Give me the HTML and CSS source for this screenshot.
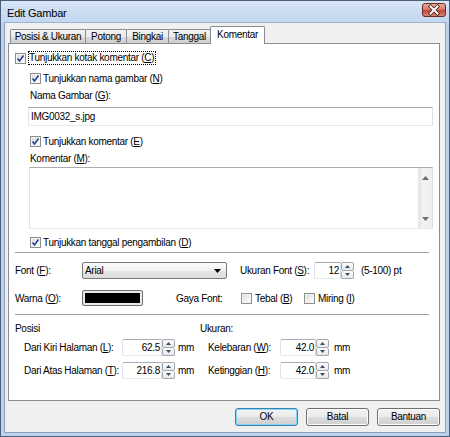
FILE: index.html
```html
<!DOCTYPE html>
<html>
<head>
<meta charset="utf-8">
<title>Edit Gambar</title>
<link rel="stylesheet" href="styles.css">
</head>
<body>
<div class="window">
  <div class="titlebar">
    <span class="title">Edit Gambar</span>
    <span class="close">
      <svg width="24" height="14" viewBox="0 0 24 14">
        <defs>
          <linearGradient id="cg" x1="0" y1="0" x2="0" y2="1">
            <stop offset="0" stop-color="#eab2a6"/>
            <stop offset="0.45" stop-color="#d37a6c"/>
            <stop offset="0.55" stop-color="#c2493b"/>
            <stop offset="1" stop-color="#d98a7c"/>
          </linearGradient>
        </defs>
        <rect x="0.5" y="0.5" width="23" height="13" rx="2.5" fill="url(#cg)" stroke="#6e2b22"/>
        <path d="M8.5 3.5 L15.5 10.5 M15.5 3.5 L8.5 10.5" stroke="#4a1a14" stroke-width="3.6" stroke-linecap="square"/>
        <path d="M8.5 3.5 L15.5 10.5 M15.5 3.5 L8.5 10.5" stroke="#ffffff" stroke-width="2" stroke-linecap="square"/>
      </svg>
    </span>
  </div>
  <div class="client">
    <div class="tabs">
      <div class="tab t1">Posisi &amp; Ukuran</div>
      <div class="tab t2">Potong</div>
      <div class="tab t3">Bingkai</div>
      <div class="tab t4">Tanggal</div>
      <div class="tab active">Komentar</div>
    </div>
    <div class="panel">
      <div class="row r1">
        <span class="cb checked"><svg width="9" height="9" viewBox="0 0 9 9"><path d="M1.5 4.5 L3.5 7 L7.5 1.5" fill="none" stroke="#23408e" stroke-width="1.6"/></svg></span>
        <span class="focus">Tunjukkan kotak komentar (<u>C</u>)</span>
      </div>
      <div class="row r2">
        <span class="cb checked"><svg width="9" height="9" viewBox="0 0 9 9"><path d="M1.5 4.5 L3.5 7 L7.5 1.5" fill="none" stroke="#23408e" stroke-width="1.6"/></svg></span>
        <span>Tunjukkan nama gambar (<u>N</u>)</span>
      </div>
      <div class="row lbl-nama">Nama Gambar (<u>G</u>):</div>
      <div class="textbox nama">IMG0032_s.jpg</div>
      <div class="row r4">
        <span class="cb checked"><svg width="9" height="9" viewBox="0 0 9 9"><path d="M1.5 4.5 L3.5 7 L7.5 1.5" fill="none" stroke="#23408e" stroke-width="1.6"/></svg></span>
        <span>Tunjukkan komentar (<u>E</u>)</span>
      </div>
      <div class="row lbl-kom">Komentar (<u>M</u>):</div>
      <div class="textarea">
        <div class="vscroll">
          <svg width="7" height="4" viewBox="0 0 7 4"><path d="M0 4 L3.5 0 L7 4 Z" fill="#6d6d6d"/></svg>
          <svg width="7" height="4" viewBox="0 0 7 4"><path d="M0 0 L3.5 4 L7 0 Z" fill="#6d6d6d"/></svg>
        </div>
      </div>
      <div class="row r-tgl">
        <span class="cb checked"><svg width="9" height="9" viewBox="0 0 9 9"><path d="M1.5 4.5 L3.5 7 L7.5 1.5" fill="none" stroke="#23408e" stroke-width="1.6"/></svg></span>
        <span>Tunjukkan tanggal pengambilan (<u>D</u>)</span>
      </div>
      <div class="sep"></div>
      <div class="row font-row">
        <span class="flabel">Font (<u>F</u>):</span>
        <div class="combo">
          <span>Arial</span>
          <svg width="7" height="4" viewBox="0 0 7 4"><path d="M0 0 L7 0 L3.5 4 Z" fill="#000"/></svg>
        </div>
        <span class="ulabel">Ukuran Font (<u>S</u>):</span>
        <div class="spin">
          <div class="spin-input w27">12</div>
          <div class="spin-btns">
            <span class="sb"><svg width="5" height="3" viewBox="0 0 5 3"><path d="M0 3 L2.5 0 L5 3 Z" fill="#3d4a5f"/></svg></span>
            <span class="sb"><svg width="5" height="3" viewBox="0 0 5 3"><path d="M0 0 L2.5 3 L5 0 Z" fill="#3d4a5f"/></svg></span>
          </div>
        </div>
        <span class="range">(5-100) pt</span>
      </div>
      <div class="row warna-row">
        <span class="flabel">Warna (<u>O</u>):</span>
        <div class="swatch"><div class="swatch-in"></div></div>
        <span class="glabel">Gaya Font:</span>
        <span class="cbgroup tebal"><span class="cb"></span><span>Tebal (<u>B</u>)</span></span>
        <span class="cbgroup"><span class="cb"></span><span>Miring (<u>I</u>)</span></span>
      </div>
      <div class="sep sep2"></div>
      <div class="row pos-head">
        <span class="poscol">Posisi</span>
        <span>Ukuran:</span>
      </div>
      <div class="row pos-row first">
        <div class="lgroup">
          <span class="plabel">Dari Kiri Halaman (<u>L</u>):</span>
          <div class="spin">
            <div class="spin-input w40">62.5</div>
            <div class="spin-btns">
              <span class="sb"><svg width="5" height="3" viewBox="0 0 5 3"><path d="M0 3 L2.5 0 L5 3 Z" fill="#3d4a5f"/></svg></span>
              <span class="sb"><svg width="5" height="3" viewBox="0 0 5 3"><path d="M0 0 L2.5 3 L5 0 Z" fill="#3d4a5f"/></svg></span>
            </div>
          </div>
          <span class="mm">mm</span>
        </div>
        <span class="rlabel">Kelebaran (<u>W</u>):</span>
        <div class="spin">
          <div class="spin-input w36">42.0</div>
          <div class="spin-btns">
            <span class="sb"><svg width="5" height="3" viewBox="0 0 5 3"><path d="M0 3 L2.5 0 L5 3 Z" fill="#3d4a5f"/></svg></span>
            <span class="sb"><svg width="5" height="3" viewBox="0 0 5 3"><path d="M0 0 L2.5 3 L5 0 Z" fill="#3d4a5f"/></svg></span>
          </div>
        </div>
        <span class="mm mm2">mm</span>
      </div>
      <div class="row pos-row second">
        <div class="lgroup">
          <span class="plabel">Dari Atas Halaman (<u>T</u>):</span>
          <div class="spin">
            <div class="spin-input w40">216.8</div>
            <div class="spin-btns">
              <span class="sb"><svg width="5" height="3" viewBox="0 0 5 3"><path d="M0 3 L2.5 0 L5 3 Z" fill="#3d4a5f"/></svg></span>
              <span class="sb"><svg width="5" height="3" viewBox="0 0 5 3"><path d="M0 0 L2.5 3 L5 0 Z" fill="#3d4a5f"/></svg></span>
            </div>
          </div>
          <span class="mm">mm</span>
        </div>
        <span class="rlabel">Ketinggian (<u>H</u>):</span>
        <div class="spin">
          <div class="spin-input w36">42.0</div>
          <div class="spin-btns">
            <span class="sb"><svg width="5" height="3" viewBox="0 0 5 3"><path d="M0 3 L2.5 0 L5 3 Z" fill="#3d4a5f"/></svg></span>
            <span class="sb"><svg width="5" height="3" viewBox="0 0 5 3"><path d="M0 0 L2.5 3 L5 0 Z" fill="#3d4a5f"/></svg></span>
          </div>
        </div>
        <span class="mm mm2">mm</span>
      </div>
    </div>
    <div class="buttons">
      <div class="btn default">OK</div>
      <div class="btn">Batal</div>
      <div class="btn">Bantuan</div>
    </div>
  </div>
</div>
</body>
</html>
```
FILE: styles.css
```css
* { box-sizing: border-box; }
body {
  margin: 0;
  background: #ffffff;
  font-family: "Liberation Sans", Arial, sans-serif;
  font-size: 10px;
  letter-spacing: -0.3px;
  color: #000;
  white-space: nowrap;
}
u { text-decoration: underline; text-underline-offset: 1px; }

.window {
  width: 450px;
  height: 437px;
  border: 1px solid #4a5f7c;
  background: linear-gradient(#d7e5f6, #c3d7ef 21px, #bdd3ec 22px, #bdd3ec);
  padding: 0 3px 3px 3px;
  display: flex;
  flex-direction: column;
}
.titlebar {
  height: 21px;
  display: flex;
  justify-content: space-between;
  align-items: flex-start;
  padding-left: 3px;
}
.title {
  font-size: 11px;
  letter-spacing: -0.2px;
  line-height: 12px;
  margin-top: 6px;
  color: #000;
}
.close { margin-top: 2px; height: 14px; display: block; }
.close svg { display: block; }

.client {
  flex: 1;
  background: #f0f0f0;
  border: 1px solid #8aa2c0;
  border-top-color: #9db3cf;
  padding-top: 3px;
  display: flex;
  flex-direction: column;
}

.tabs {
  display: flex;
  height: 17px;
  margin-left: 5px;
  align-items: flex-end;
  position: relative;
  z-index: 1;
}
.tab {
  height: 14px;
  line-height: 13px;
  border: 1px solid #898c95;
  border-bottom: none;
  margin-right: -1px;
  text-align: center;
  background: linear-gradient(#f3f3f3, #ebebeb 50%, #dcdcdc 51%, #cfcfcf);
  border-radius: 2px 2px 0 0;
}
.t1 { width: 76px; }
.t2 { width: 42px; }
.t3 { width: 43px; }
.t4 { width: 43px; }
.tab.active {
  width: 55px;
  height: 18px;
  margin-bottom: -1px;
  background: #fff;
  line-height: 15px;
}

.panel {
  margin: 0 5px 0 3px;
  height: 358px;
  border: 1px solid #898c95;
  background: #fff;
  padding-top: 6px;
}

.row { display: flex; align-items: center; }
.r1 { height: 16px; margin-left: 6px; }
.r2 { height: 16px; margin-top: 4px; margin-left: 21px; }
.lbl-nama { height: 14px; margin-top: 2px; margin-left: 21px; }
.r4 { height: 14px; margin-top: 8px; margin-left: 21px; }
.lbl-kom { height: 14px; margin-top: 3px; margin-left: 21px; }
.r-tgl { height: 15px; margin-top: 6px; margin-left: 21px; }

.cb {
  width: 11px;
  height: 11px;
  border: 1px solid #8e8f8f;
  background: linear-gradient(135deg, #d8d8d8, #f6f6f6 70%, #ffffff);
  box-shadow: inset 0 0 0 1px #f4f4f4;
  margin-right: 2px;
  display: inline-flex;
  align-items: center;
  justify-content: center;
  flex: none;
}
.cb svg { display: block; }
.focus { border: 1px dotted #000; padding: 0 1px 0 0; line-height: 12px; }

.textbox {
  height: 19px;
  border: 1px solid;
  border-color: #abadb3 #dbdfe6 #e3e9ef #e2e3ea;
  background: #fff;
  line-height: 17px;
}
.nama {
  margin-top: 5px;
  margin-left: 19px;
  width: 405px;
  padding-left: 2px;
}

.textarea {
  margin-top: 2px;
  margin-left: 20px;
  width: 404px;
  height: 62px;
  border: 1px solid;
  border-color: #abadb3 #dbdfe6 #e3e9ef #e2e3ea;
  display: flex;
  justify-content: flex-end;
}
.vscroll {
  width: 14px;
  background: linear-gradient(90deg, #e4e4e4, #f3f3f3 40%, #eeeeee);
  display: flex;
  flex-direction: column;
  justify-content: space-between;
  align-items: center;
  padding: 8px 0 7px;
}
.vscroll svg { display: block; }

.sep {
  height: 1px;
  background: #a0a0a0;
  margin: 2px 10px 0 6px;
}
.sep2 { margin-top: 7px; }

.font-row { height: 19px; margin-top: 8px; margin-left: 6px; }
.flabel { width: 67px; flex: none; }
.combo {
  width: 145px;
  height: 17px;
  border: 1px solid #7a7a7a;
  border-radius: 2px;
  background: linear-gradient(#fbfbfb, #f1f1f1 50%, #e6e6e6 51%, #dcdcdc);
  display: flex;
  align-items: center;
  justify-content: space-between;
  padding: 0 5px 0 2px;
}
.combo svg { display: block; }
.ulabel { margin-left: 13px; width: 74px; flex: none; }
.range { margin-left: 7px; }

.spin { display: flex; height: 17px; flex: none; }
.spin-input {
  height: 17px;
  border: 1px solid;
  border-color: #abadb3 #dbdfe6 #e3e9ef #e2e3ea;
  border-radius: 2px 0 0 2px;
  text-align: right;
  padding-right: 1px;
  line-height: 15px;
  background: #fff;
}
.w27 { width: 27px; }
.w40 { width: 40px; }
.w36 { width: 36px; }
.spin-btns {
  width: 13px;
  display: flex;
  flex-direction: column;
}
.sb {
  flex: 1;
  border: 1px solid #a3a6ad;
  border-radius: 2px;
  background: linear-gradient(#fdfdfd, #e6e8ec);
  display: flex;
  align-items: center;
  justify-content: center;
}
.sb + .sb { border-top: none; }
.sb svg { display: block; }

.warna-row { height: 18px; margin-top: 9px; margin-left: 6px; }
.swatch {
  width: 61px;
  height: 16px;
  border: 1px solid #707070;
  border-radius: 2px;
  background: #e9e9e9;
  padding: 2px;
  flex: none;
}
.swatch-in { width: 100%; height: 100%; background: #000; }
.glabel { margin-left: 33px; width: 65px; flex: none; }
.cbgroup { display: flex; align-items: center; }
.cbgroup .cb { margin-right: 3px; }
.tebal { width: 63px; flex: none; }

.pos-head { height: 14px; margin-top: 6px; margin-left: 6px; }
.poscol { width: 185px; flex: none; }
.pos-row { height: 17px; margin-left: 15px; }
.pos-row.first { margin-top: 4px; }
.pos-row.second { margin-top: 6px; }
.lgroup { width: 184px; display: flex; align-items: center; flex: none; }
.plabel { width: 98px; flex: none; }
.mm { margin-left: 3px; }
.rlabel { width: 72px; flex: none; }
.mm2 { margin-left: 5px; }

.buttons {
  display: flex;
  justify-content: flex-end;
  gap: 8px;
  margin: 7px 5px 0 0;
}
.btn {
  width: 63px;
  height: 18px;
  border: 1px solid #707070;
  border-radius: 3px;
  background: linear-gradient(#f3f3f3, #ebebeb 50%, #dddddd 51%, #cfcfcf);
  box-shadow: inset 0 0 0 1px #fbfbfb;
  text-align: center;
  line-height: 16px;
}
.btn.default {
  border-color: #3c7fb1;
  box-shadow: inset 0 0 0 1px #7fd8f8;
}
```
